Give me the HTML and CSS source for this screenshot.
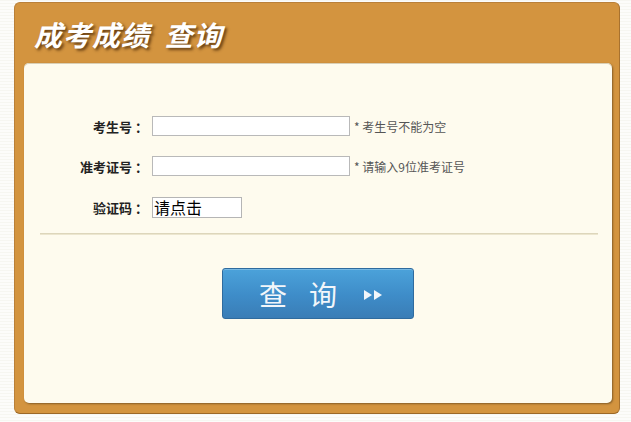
FILE: index.html
```html
<!DOCTYPE html>
<html lang="zh">
<head>
<meta charset="utf-8">
<title>成考成绩查询</title>
<link rel="stylesheet" href="styles.css">
</head>
<body>
<div class="frame">
  <div class="header"><h1 class="title">成考成绩&nbsp;&nbsp;查询</h1></div>
  <div class="panel">
    <form class="form">
      <div class="row">
        <label class="label">考生号<span class="colon">：</span></label>
        <input class="field" type="text">
        <span class="hint">* 考生号不能为空</span>
      </div>
      <div class="row">
        <label class="label">准考证号<span class="colon">：</span></label>
        <input class="field" type="text">
        <span class="hint">* 请输入9位准考证号</span>
      </div>
      <div class="row row3">
        <label class="label">验证码<span class="colon">：</span></label>
        <span class="captcha">请点击</span>
      </div>
    </form>
    <div class="divider"></div>
    <div class="actions">
      <button class="btn" type="button">
        <span class="btn-char">查</span>
        <span class="btn-char btn-char2">询</span>
        <span class="arrows"><i class="tri"></i><i class="tri"></i></span>
      </button>
    </div>
  </div>
</div>
</body>
</html>
```

FILE: styles.css
```css
html, body {
  margin: 0;
  padding: 0;
}
body {
  width: 631px;
  height: 422px;
  overflow: hidden;
  background: repeating-linear-gradient(180deg, #f6f6f1 0px, #f6f6f1 1px, #fcfcfa 1px, #fcfcfa 3px);
  font-family: "Noto Sans CJK SC", "Noto Sans", sans-serif;
}
.frame {
  box-sizing: border-box;
  margin: 2px 0 0 14px;
  width: 606px;
  height: 412px;
  background: #d3943f;
  border: 1px solid #b98039;
  border-bottom-color: #9c6827;
  border-right-color: #a8722f;
  border-radius: 6px;
  display: flex;
  flex-direction: column;
}
.header {
  height: 60px;
  flex: none;
  padding-left: 19px;
  box-sizing: border-box;
  padding-top: 13px;
}
.title {
  margin: 0;
  font-size: 28px;
  line-height: 36px;
  font-weight: bold;
  font-style: italic;
  color: #ffffff;
  text-shadow: 2px 2px 3px rgba(60, 30, 0, 0.75);
  letter-spacing: 1px;
}
.panel {
  flex: 1;
  margin: 0 7px 10px 9px;
  background: #fefbee;
  border-radius: 5px;
  box-shadow: 1px 1px 2px rgba(70, 50, 20, 0.55), inset 0 1px 0 #d9cfb5;
  display: flex;
  flex-direction: column;
  padding-top: 53px;
}
.form {
  display: flex;
  flex-direction: column;
  gap: 20px;
  margin: 0;
}
.row3 {
  margin-top: 1px;
}
.row {
  display: flex;
  align-items: center;
  height: 20px;
}
.label {
  width: 124px;
  text-align: right;
  font-size: 13px;
  font-weight: bold;
  color: #222;
  margin-right: 4px;
}
.colon {
  display: inline-block;
  padding-left: 3px;
}
.field {
  box-sizing: border-box;
  width: 198px;
  height: 20px;
  margin: 0;
  padding: 0 2px;
  border: 1px solid #b9b9b9;
  background: #fff;
}
.hint {
  margin-left: 4px;
  font-size: 12px;
  color: #555;
}
.captcha {
  box-sizing: border-box;
  width: 90px;
  height: 21px;
  border: 1px solid #b5b5b5;
  background: #fff;
  font-size: 16px;
  line-height: 18px;
  color: #000;
  padding-left: 1px;
  margin-top: 1px;
}
.divider {
  height: 1px;
  background: #ddd6bb;
  border-bottom: 1px solid #ece6cf;
  margin: 16px 14px 0 16px;
}
.actions {
  display: flex;
  justify-content: center;
  padding-top: 33px;
}
.btn {
  box-sizing: border-box;
  width: 192px;
  height: 51px;
  margin: 0;
  padding: 0 0 0 36px;
  border: 1px solid #2f6b9e;
  border-radius: 3px;
  background: linear-gradient(180deg, #4ba2da 0%, #3e8cc8 55%, #3a7db6 100%);
  box-shadow: inset 0 1px 0 rgba(255, 255, 255, 0.25);
  display: flex;
  align-items: center;
  color: #f2f6fa;
  font-family: "Noto Sans CJK SC", sans-serif;
  font-size: 28px;
  line-height: 1;
  cursor: pointer;
}
.btn-char {
  display: block;
}
.btn-char2 {
  margin-left: 22px;
}
.arrows {
  display: flex;
  gap: 2px;
  margin-left: 27px;
  margin-top: 2px;
}
.tri {
  width: 0;
  height: 0;
  border-top: 5px solid transparent;
  border-bottom: 5px solid transparent;
  border-left: 8px solid #f2f6fa;
}
```
